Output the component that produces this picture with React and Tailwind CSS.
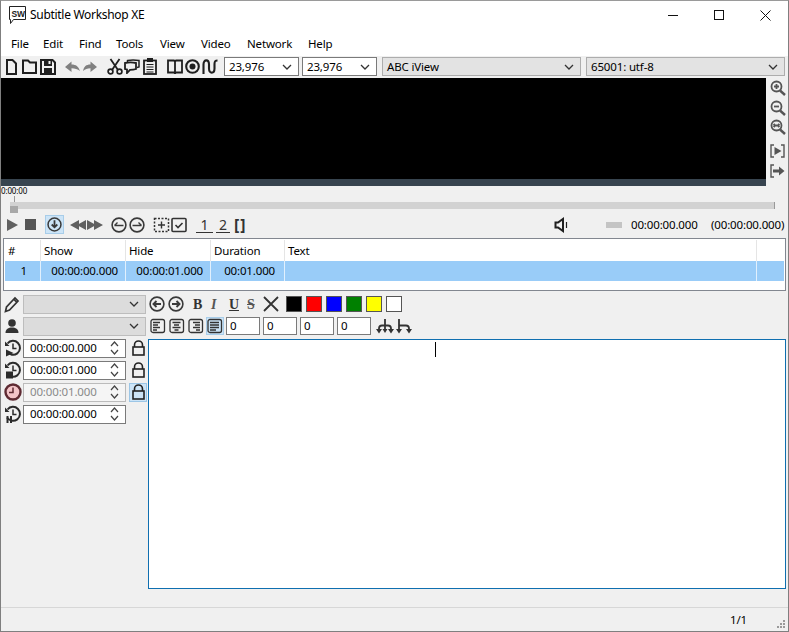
const Ico = ({ w = 16, h = 16, className = "", children }) => (
  <svg width={w} height={h} viewBox={`0 0 ${w} ${h}`} className={"shrink-0 " + className} fill="none" stroke="#1f1f1f" strokeWidth="2">
    {children}
  </svg>
);

const Chevron = () => (
  <svg width="10" height="6" viewBox="0 0 10 6" className="shrink-0" fill="none" stroke="#333" strokeWidth="1.3">
    <path d="M1 1l4 4 4-4" />
  </svg>
);

const Combo = ({ text, className = "", white }) => (
  <div className={"h-[19px] flex items-center justify-between pl-[4px] pr-[6px] border " + (white ? "bg-white border-[#7a7a7a] " : "bg-[#e3e3e3] border-[#adadad] ") + className}>
    <span>{text}</span>
    <Chevron />
  </div>
);

const Swatch = ({ color }) => <div className={"w-[16px] h-[16px] border border-[#555] mr-[4px] " + color} />;

const Num = () => (
  <div className="w-[34px] h-[18px] mr-[3px] bg-white border border-[#7a7a7a] pl-[3px] leading-[16px]">0</div>
);

const Spin = () => (
  <svg width="9" height="14" viewBox="0 0 9 14" className="shrink-0" fill="none" stroke="#444" strokeWidth="1.2">
    <path d="M1 5l3.500-4L8 5M1 9l3.500 4L8 9" />
  </svg>
);

const Lock = ({ active }) => (
  <div className={"w-[18px] h-[19px] flex items-center justify-center " + (active ? "bg-[#cce4f7] border border-[#9cc6e6]" : "")}>
    <svg width="13" height="16" viewBox="0 0 13 16" fill="none" stroke="#222" strokeWidth="1.600">
      <path d="M2.500 7V5a4 4 0 0 1 8 0v2" />
      <rect x="1" y="7" width="11" height="8" />
    </svg>
  </div>
);

const TimeInput = ({ value, disabled }) => (
  <div className={"w-[103px] h-[19px] flex items-center justify-between border pl-[6px] pr-[6px] " + (disabled ? "bg-[#f5f5f5] border-[#bbb] text-[#8a8a8a]" : "bg-white border-[#7a7a7a]")}>
    <span>{value}</span>
    <Spin />
  </div>
);

const ClockIcon = ({ mark }) => (
  <svg width="18" height="18" viewBox="0 0 18 18" className="shrink-0" fill="none" stroke="#2b2b2b" strokeWidth="2">
    <path d="M3.500 4.500A7 7 0 1 1 3 12.500" />
    <path d="M1 2.500V7h4.500" strokeWidth="1.600" fill="#2b2b2b" stroke="none" />
    <path d="M9 4.500V9.500H12.500" strokeWidth="1.500" />
    {mark}
  </svg>
);

const TimeRow = ({ icon, value, disabled, lock, active }) => (
  <div className="h-[22px] flex items-center">
    <div className="w-[22px] pl-[3px] flex items-center">{icon}</div>
    <TimeInput value={value} disabled={disabled} />
    <div className="ml-[3px]">{lock && <Lock active={active} />}</div>
  </div>
);

const ToolIcons = () => (
  <>
    <Ico w={11} h={16} className="ml-[5px]">
      <path d="M1 1h5.500L10 4.500V15H1z" />
    </Ico>
    <Ico w={15} h={15} className="ml-[5px]">
      <path d="M1 14V1.500h5l2 2h6V14z" />
    </Ico>
    <Ico w={16} h={16} className="ml-[3px]">
      <path d="M1 1h11.500L15 3.500V15H1z" />
      <rect x="4" y="1" width="8" height="6" fill="#1f1f1f" stroke="none" />
      <rect x="4" y="9" width="8" height="6" fill="#1f1f1f" stroke="none" />
      <rect x="8.500" y="2" width="2" height="3" fill="#f0f0f0" stroke="none" />
    </Ico>
    <Ico w={15} h={11} className="ml-[9px]">
      <path d="M0 6l6.500-5.500V3.500c4.500 0 7 2 8.500 6.500-2.500-2-5-2.800-8.500-2.800V11z" fill="#808080" stroke="none" />
    </Ico>
    <Ico w={14} h={11} className="ml-[3px]">
      <path d="M14 6L7.500 0.500V3.500C3 3.500 1 5.500 0 10c2.500-2 4-2.800 7.500-2.800V11z" fill="#808080" stroke="none" />
    </Ico>
    <Ico w={16} h={17} className="ml-[10px]">
      <path d="M3.500 1l7.500 11M12.500 1L5 12" strokeWidth="1.800" />
      <circle cx="3.500" cy="13.500" r="2.400" strokeWidth="1.700" />
      <circle cx="12.500" cy="13.500" r="2.400" strokeWidth="1.700" />
    </Ico>
    <Ico w={16} h={15} className="ml-[1px]">
      <path d="M3.500 3V1.500C7 0.800 11 0.800 15 1.500V8l-2 .5" strokeWidth="1.500" />
      <path d="M1 4c4-.8 7-.8 11 0v6c-2 .7-4 .8-6 .8L3 14v-3.500L1 10z" strokeWidth="1.800" />
    </Ico>
    <Ico w={14} h={17} className="ml-[3px]">
      <rect x="1" y="2.500" width="12" height="13.500" strokeWidth="1.800" />
      <rect x="4" y="0" width="6" height="4" fill="#1f1f1f" stroke="none" />
      <path d="M3.500 6.500h7M3.500 9h7M3.500 11.500h7M3.500 14h7" strokeWidth="1.200" />
    </Ico>
    <Ico w={16} h={15} className="ml-[10px]">
      <path d="M1 1.500h6l1 1 1-1h6V13.500H9l-1 1-1-1H1zM8 2.500V14" strokeWidth="1.800" />
    </Ico>
    <Ico w={15} h={15} className="ml-[2px]">
      <circle cx="7.500" cy="7.500" r="6.300" strokeWidth="2.100" />
      <circle cx="7.500" cy="7.500" r="3" fill="#1f1f1f" stroke="none" />
    </Ico>
    <Ico w={16} h={15} className="ml-[2px]">
      <path d="M1.500 15V5.500c0-5.500 5.500-5.500 5.500 0v4c0 5.500 5.500 5.500 5.500 0V5c0-3 1-3.500 3-3.500" strokeWidth="2.100" />
    </Ico>
  </>
);

const CircleArrow = ({ d, size = 16, sw = 1.9 }) => (
  <svg width={size} height={size} viewBox="0 0 16 16" className="shrink-0" fill="none" stroke="#3a3a3a" strokeWidth="1.600">
    <circle cx="8" cy="8" r="6.900" />
    <path d={d} strokeWidth={sw} />
  </svg>
);

const Tri = ({ d, w = 14, className = "" }) => (
  <svg width={w} height="12" viewBox={`0 0 ${w} 12`} className={"shrink-0 " + className}>
    <path d={d} fill="#606060" />
  </svg>
);

const PlayerBar = () => (
  <div className="h-[21px] flex items-center">
    <Tri w={11} d="M0 0l11 6-11 6z" />
    <div className="ml-[7px]"><div className="w-[11px] h-[11px] bg-[#555]" /></div>
    <div className="ml-[9px] w-[19px] h-[19px] bg-[#cce4f7] border border-[#a8cde9] flex items-center justify-center">
      <CircleArrow size={15} d="M8 3.500V11M5 8l3 3 3-3" />
    </div>
    <div className="ml-[6px] flex">
      <Tri w={16} d="M9 1v10L0 6zM16 1v10L7 6z" />
      <Tri w={16} className="ml-[1px]" d="M0 1v10l9-5zM7 1v10l9-5z" />
    </div>
    <div className="ml-[8px]"><CircleArrow sw={1.4} d="M3.500 8.500h9M3.500 8.500L6.500 5.500" /></div>
    <div className="ml-[2px]"><CircleArrow sw={1.4} d="M3.500 8.500h9M12.500 8.500L9.500 5.500" /></div>
    <svg width="17" height="16" viewBox="0 0 17 16" className="ml-[8px] shrink-0" fill="none" stroke="#333">
      <rect x="1.500" y="1.500" width="14" height="13" strokeDasharray="2 1.500" strokeWidth="1.500" />
      <path d="M8.500 4.500v7M5 8h7" strokeWidth="1.400" />
    </svg>
    <svg width="16" height="16" viewBox="0 0 16 16" className="ml-[1px] shrink-0" fill="none" stroke="#333" strokeWidth="1.600">
      <rect x="1" y="1.500" width="14" height="13" rx="1" />
      <path d="M4.500 8l2.500 2.500 4.500-4.500" />
    </svg>
    <div className="ml-[9px] w-[17px] text-center text-[14px] leading-[15px] border-b border-[#333] text-[#333]">1</div>
    <div className="ml-[3px] w-[14px] text-center text-[14px] leading-[15px] border-b border-[#333] text-[#333]">2</div>
    <div className="ml-[4px] w-[11px] text-[16px] font-bold leading-none text-[#333] tracking-[1px]">[]</div>
    <svg width="15" height="16" viewBox="0 0 15 16" className="ml-[309px] shrink-0" fill="none" stroke="#1f1f1f" strokeWidth="2">
      <path d="M1.500 5.500h2.500L9 2v12L4 10.500H1.500z" />
      <path d="M12.500 5v6" strokeWidth="1.200" />
    </svg>
    <div className="ml-[37px] w-[16px] h-[6px] bg-[#c4c4c4]" />
    <span className="ml-[9px] w-[80px]">00:00:00.000</span>
    <span>(00:00:00.000)</span>
  </div>
);

const cols = [
  ["#", "w-[36px]", "1", "pr-[13px] text-right"],
  ["Show", "w-[85px]", "00:00:00.000", "pr-[7px] text-right"],
  ["Hide", "w-[85px]", "00:00:01.000", "pr-[7px] text-right"],
  ["Duration", "w-[74px]", "00:01.000", "pr-[9px] text-right"],
  ["Text", "w-[472px]", "", ""],
  ["", "flex-1", "", ""],
];

export default function App() {
  return (
    <div className="w-[789px] h-[632px] overflow-hidden flex flex-col bg-[#f0f0f0] border border-[#7f7f7f] border-t-[#9a9a9a] text-[11.5px] tracking-[-0.15px] text-black font-['Noto_Sans','Open_Sans',sans-serif]">
      {/* title bar */}
      <div className="h-[28px] bg-white flex items-center shrink-0">
        <svg width="17" height="19" viewBox="0 0 17 19" className="ml-[8px] shrink-0" fill="none" stroke="#222">
          <path d="M0.500 0.500h16v13h-12l-3 4v-4H0.500z" />
          <text x="2.500" y="10.500" fontSize="8.500" fill="#222" stroke="none" fontWeight="700" fontFamily="Liberation Sans">SW</text>
        </svg>
        <span className="ml-[4px] text-[12px] tracking-[-0.3px]">Subtitle Workshop XE</span>
        <div className="ml-auto flex h-full">
          <div className="w-[46px] flex items-center justify-center">
            <div className="w-[10px] h-[1px] bg-[#111]" />
          </div>
          <div className="w-[46px] flex items-center justify-center">
            <div className="w-[10px] h-[10px] border border-[#111]" />
          </div>
          <div className="w-[46px] flex items-center justify-center">
            <svg width="11" height="11" viewBox="0 0 11 11" stroke="#111"><path d="M0.500 0.500l10 10M10.500 0.500l-10 10" /></svg>
          </div>
        </div>
      </div>
      {/* menu */}
      <div className="h-[27px] bg-white flex items-center pl-[10px] shrink-0 pt-[2px]">
        {["File", "Edit", "Find", "Tools", "View", "Video", "Network", "Help"].map((m, i) => (
          <span key={m} className={["w-[32px]", "w-[36px]", "w-[37px]", "w-[44px]", "w-[41px]", "w-[46px]", "w-[61px]", ""][i]}>{m}</span>
        ))}
      </div>
      {/* toolbar */}
      <div className="h-[21px] flex items-center shrink-0">
        <ToolIcons />
        <Combo white text="23,976" className="ml-[6px] w-[75px]" />
        <Combo white text="23,976" className="ml-[3px] w-[75px]" />
        <Combo text="ABC iView" className="ml-[5px] w-[199px]" />
        <Combo text="65001: utf-8" className="ml-[5px] w-[199px]" />
      </div>
      {/* video + side buttons */}
      <div className="h-[108px] mt-[1px] flex shrink-0">
        <div className="w-[765px] flex flex-col">
          <div className="flex-1 bg-black" />
          <div className="h-[7px] bg-[#37444f]" />
        </div>
        <div className="flex-1 flex flex-col items-center pt-[2px] pl-[1px]">
          {["M6 4.500v5M3.500 7h5", "M3.500 7h5", "M3 7h6M3 7l1.500-1.500M3 7l1.500 1.500M9 7L7.500 5.500M9 7L7.500 8.500"].map((d) => (
            <svg key={d} width="16" height="16" viewBox="0 0 16 16" className="mb-[3.500px]" fill="none" stroke="#555" strokeWidth="1.800">
              <circle cx="6.500" cy="6.500" r="5" />
              <path d="M10 10.500l5 4.500" strokeWidth="2.400" />
              <path d={d} transform="translate(0.500 -0.500)" />
            </svg>
          ))}
          <svg width="15" height="14" viewBox="0 0 15 14" className="mt-[5px]" fill="none" stroke="#555" strokeWidth="1.400">
            <path d="M4 1H1v12h3M11 1h3v12h-3" />
            <path d="M4.500 3l7 4-7 4z" fill="#555" stroke="none" />
          </svg>
          <svg width="15" height="14" viewBox="0 0 15 14" className="mt-[6px]" fill="none" stroke="#555" strokeWidth="1.400">
            <path d="M4 1H1v12h3" />
            <path d="M3 5.500h6V2.500l5.500 4.500L9 11.500V8.500H3z" fill="#555" stroke="none" />
          </svg>
        </div>
      </div>
      {/* timeline */}
      <div className="h-[28px] shrink-0 flex flex-col">
        <div className="h-[10px] text-[8px] leading-[10px]">0:00:00</div>
        <div className="relative h-[7px] mt-[6px] ml-[9px] w-[765px] bg-[#d2d2d2] border-r border-[#999]">
          <div className="absolute left-[4px] -top-[6px] w-px h-[6px] bg-[#999]" />
          <div className="absolute left-0 top-[4px] w-[8px] h-[7px] bg-[#a8a8a8]" />
        </div>
      </div>
      <div className="pl-[6px]"><PlayerBar /></div>
      {/* subtitle list */}
      <div className="h-[53px] ml-[2px] mr-[2px] mt-[3px] bg-white border border-[#828790] pt-[1px] px-[1px] shrink-0">
        <div className="h-[21px] flex">
          {cols.map(([h, w], i) => (
            <div key={i} className={"pl-[3px] leading-[21px] border-r border-[#e5e5e5] last:border-r-0 " + w}>{h}</div>
          ))}
        </div>
        <div className="h-[20px] flex bg-[#99ccf8]">
          {cols.map(([h, w, v, align], i) => (
            <div key={i} className={"leading-[20px] border-r border-white/70 last:border-r-0 " + w + " " + align}>{v}</div>
          ))}
        </div>
      </div>
      {/* editor */}
      <div className="flex-1 flex min-h-0 pt-[2px]">
        <div className="w-[146px] shrink-0 flex flex-col">
          <div className="h-[22px] flex items-center">
            <svg width="16" height="17" viewBox="0 0 16 17" className="ml-[3px] shrink-0" fill="none" stroke="#333" strokeWidth="1.700">
              <path d="M1.500 15.500l1-4.500L11 2l3 3-8.500 9zM10 3.500l2.500 2.500" />
            </svg>
            <Combo text="" className="ml-[3px] w-[123px] !bg-[#dcdcdc] !border-[#bdbdbd]" />
          </div>
          <div className="h-[22px] flex items-center">
            <svg width="16" height="16" viewBox="0 0 16 16" className="ml-[3px] shrink-0" fill="#333">
              <circle cx="8" cy="5" r="3.800" />
              <path d="M1.500 15c0-4 3-5.500 6.500-5.500s6.500 1.500 6.500 5.500z" />
            </svg>
            <Combo text="" className="ml-[3px] w-[123px] !bg-[#dcdcdc] !border-[#bdbdbd]" />
          </div>
          <TimeRow value="00:00:00.000" lock icon={<ClockIcon mark={<path d="M2 10.500l7.500 3.500L2 17.500z" fill="#2b2b2b" stroke="none" />} />} />
          <TimeRow value="00:00:01.000" lock icon={<ClockIcon mark={<rect x="2" y="10.500" width="7" height="7" fill="#2b2b2b" stroke="none" />} />} />
          <TimeRow value="00:00:01.000" disabled lock active icon={
            <svg width="18" height="18" viewBox="0 0 18 18" className="shrink-0" fill="#f3c4c8" stroke="#5e2a32" strokeWidth="2.400">
              <circle cx="9" cy="9" r="7.500" />
              <path d="M9 4.500V9.500H5" fill="none" strokeWidth="1.500" />
            </svg>
          } />
          <TimeRow value="00:00:00.000" icon={<ClockIcon mark={<path d="M3.500 11v7M7 11v7" strokeWidth="2" />} />} />
        </div>
        <div className="flex-1 flex flex-col pl-[1px] pr-[2px]">
          <div className="h-[22px] flex items-center pl-[1px]">
            <CircleArrow d="M12 8H4.500M7.500 5l-3 3 3 3" />
            <div className="ml-[3px]"><CircleArrow d="M4 8h7.500M8.500 5l3 3-3 3" /></div>
            <span className="ml-[9px] w-[15px] font-['Liberation_Serif',serif] text-[14px] font-bold text-[#333]">B</span>
            <span className="ml-[3px] w-[15px] font-['Liberation_Serif',serif] text-[14px] font-bold italic text-[#555]">I</span>
            <span className="ml-[3px] w-[16px] font-['Liberation_Serif',serif] text-[14px] font-bold underline text-[#333]">U</span>
            <span className="ml-[2px] w-[16px] font-['Liberation_Serif',serif] text-[14px] font-bold line-through text-[#555]">S</span>
            <svg width="16" height="16" viewBox="0 0 16 16" className="mr-[7px] shrink-0" stroke="#333" strokeWidth="1.800">
              <path d="M1 1l14 14M15 1L1 15" />
            </svg>
            <Swatch color="bg-black" />
            <Swatch color="bg-[#ff0000]" />
            <Swatch color="bg-[#0000ff]" />
            <Swatch color="bg-[#008000]" />
            <Swatch color="bg-[#ffff00]" />
            <Swatch color="bg-white" />
          </div>
          <div className="h-[22px] flex items-center pl-[1px]">
            {["M3 4.500h7M3 7h5M3 9.500h7M3 12h4", "M3.500 4.500h8M5 7h5M3.500 9.500h8M5.500 12h4", "M5 4.500h7M7 7h5M5 9.500h7M8 12h4", "M3 4.500h9M3 7h9M3 9.500h9M3 12h6"].map((d, i) => (
              <div key={i} className={"w-[18px] h-[18px] mr-[1px] flex items-center justify-center " + (i === 3 ? "bg-[#cce4f7] border border-[#a8cde9]" : "")}>
                <svg width="16" height="16" viewBox="0 0 16 16" fill="none" stroke="#333" strokeWidth="1.300">
                  <rect x="1" y="1.500" width="13.500" height="13" rx="2" />
                  <path d={d} />
                </svg>
              </div>
            ))}
            <div className="ml-[1px] flex items-center">
              <Num /><Num /><Num /><Num />
            </div>
            <svg width="18" height="15" viewBox="0 0 18 15" className="ml-[2px] shrink-0" fill="none" stroke="#333" strokeWidth="1.800">
              <path d="M9 0v10M3 11V9.500C3 7.500 4 6.500 6 6.500h6c2 0 3 1 3 3V11" />
              <path d="M0 10h6l-3 4.500zM12 10h6l-3 4.500zM6.500 10h5L9 14z" fill="#333" stroke="none" />
            </svg>
            <svg width="17" height="15" viewBox="0 0 17 15" className="ml-[2px] shrink-0" fill="none" stroke="#333" strokeWidth="1.800">
              <path d="M3 0v11M3 6.500h7c2 0 3 1 3 3V11" />
              <path d="M0 10h6l-3 4.500zM10 10h6l-3 4.500z" fill="#333" stroke="none" />
            </svg>
          </div>
          <div className="h-[250px] mt-[2px] bg-white border border-[#0f6fb0] pl-[286px] pt-[2px]">
            <div className="w-px h-[15px] bg-black" />
          </div>
        </div>
      </div>
      {/* status bar */}
      <div className="h-[24px] shrink-0 border-t border-[#d7d7d7] flex items-center justify-end relative">
        <span className="mr-[41px] pt-[1px]">1/1</span>
        <div className="absolute right-[3px] bottom-[3px] grid grid-cols-3 gap-[1px]">
          {[0, 1, 2, 3, 4, 5, 6, 7, 8].map((i) => (
            <div key={i} className={"w-[2px] h-[2px] " + ([0, 1, 3].includes(i) ? "" : "bg-[#9a9a9a]")} />
          ))}
        </div>
      </div>
    </div>
  );
}
